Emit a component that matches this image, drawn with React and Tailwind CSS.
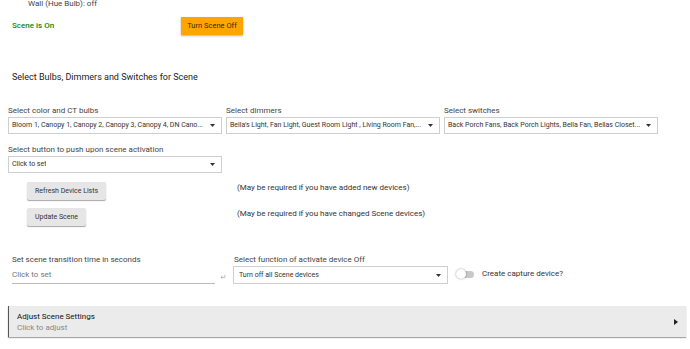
import React from "react";

const Caret = () => (
  <svg width="5" height="3" viewBox="0 0 5 3" className="shrink-0">
    <path d="M0 0 L5 0 L2.5 3 Z" fill="#333" />
  </svg>
);

const Select = ({ value, className = "" }) => (
  <div
    className={`flex items-center justify-between h-[17px] border border-[#cfcfcf] bg-white pl-[3px] pr-[6px] text-[7px] text-[#333] ${className}`}
  >
    <span className="overflow-hidden whitespace-nowrap">{value}</span>
    <Caret />
  </div>
);

const Field = ({ label, value }) => (
  <div>
    <div className="text-[8px] leading-[11px] text-[#444]">{label}</div>
    <Select value={value} className="mt-[1px]" />
  </div>
);

const GrayButton = ({ children }) => (
  <button className="h-[18px] px-[8px] bg-[#e6e6e6] rounded-[2px] text-[7px] text-[#333] shadow-[0_1px_1px_rgba(0,0,0,0.35)]">
    {children}
  </button>
);

export default function App() {
  return (
    <div
      className="w-[690px] h-[349px] overflow-hidden bg-white text-[#333]"
      style={{ fontFamily: "Roboto, 'Liberation Sans', sans-serif" }}
    >
      {/* device status line, cut at the top */}
      <div className="h-[10px] pl-[28px] text-[8px] leading-[8px] text-[#444]">
        Wall (Hue Bulb): off
      </div>

      <div className="flex items-center mt-[7px] h-[18px]">
        <div className="w-[181px] pl-[12px] text-[8px] font-medium text-[#0a870a]">
          Scene is On
        </div>
        <button className="w-[62px] h-[18px] bg-[#ffa500] text-[7.5px] text-[#3a2a00] shadow-[0_1px_2px_rgba(0,0,0,0.3)]">
          Turn Scene Off
        </button>
      </div>

      <div className="mt-[36px] pl-[12px] text-[9px] leading-[12px] text-[#222]">
        Select Bulbs, Dimmers and Switches for Scene
      </div>

      <div className="mt-[22px] pl-[8px] grid grid-cols-[214px_214px_214px] gap-x-[4px]">
        <Field
          label="Select color and CT bulbs"
          value="Bloom 1, Canopy 1, Canopy 2, Canopy 3, Canopy 4, DN Cano..."
        />
        <Field
          label="Select dimmers"
          value="Bella's Light, Fan Light, Guest Room Light , Living Room Fan,..."
        />
        <Field
          label="Select switches"
          value="Back Porch Fans, Back Porch Lights, Bella Fan, Bellas Closet..."
        />
      </div>

      <div className="mt-[10px] pl-[8px] w-[222px]">
        <Field label="Select button to push upon scene activation" value="Click to set" />
      </div>

      <div className="mt-[6px] flex items-center h-[18px]">
        <div className="w-[237px] pl-[27px]">
          <GrayButton>Refresh Device Lists</GrayButton>
        </div>
        <span className="text-[8px] text-[#333]">
          (May be required if you have added new devices)
        </span>
      </div>

      <div className="mt-[8px] flex items-center h-[18px]">
        <div className="w-[237px] pl-[27px]">
          <GrayButton>Update Scene</GrayButton>
        </div>
        <span className="text-[8px] text-[#333]">
          (May be required if you have changed Scene devices)
        </span>
      </div>

      <div className="mt-[31px] flex items-start">
        <div className="w-[233px] pl-[12px] flex items-end shrink-0">
          <div className="w-[203px]">
            <div className="text-[8px] leading-[11px] text-[#444]">
              Set scene transition time in seconds
            </div>
            <div className="mt-[4px] pb-[3px] border-b border-[#bbb] text-[8px] leading-[11px] text-[#777]">
              Click to set
            </div>
          </div>
          <svg width="6" height="6" viewBox="0 0 8 7" className="ml-[5px] mb-[4px]">
            <path d="M6.5 0.5 V4 H1.5 M3 2.5 L1.2 4 L3 5.5" fill="none" stroke="#999" strokeWidth="0.9" />
          </svg>
        </div>
        <div className="w-[215px] shrink-0">
          <div className="text-[8px] leading-[11px] text-[#444] pl-[1px]">
            Select function of activate device Off
          </div>
          <Select value="Turn off all Scene devices" className="mt-[1px] h-[18px] pl-[5px]" />
        </div>
        <div className="ml-[8px] mt-[14px] flex items-center">
          <div className="relative w-[18px] h-[10px] flex items-center">
            <div className="ml-[4px] w-[14px] h-[7px] rounded-full bg-[#c8c8c8]" />
            <div className="absolute left-0 top-0 w-[10px] h-[10px] rounded-full bg-white shadow-[0_0_2px_rgba(0,0,0,0.45)]" />
          </div>
          <span className="ml-[8px] text-[8px] text-[#333]">Create capture device?</span>
        </div>
      </div>

      <div className="mt-[22px] ml-[8px] w-[678px] h-[31px] bg-[#ebebeb] border-l border-[#555] shadow-[0_1px_1px_rgba(0,0,0,0.35)] flex items-center justify-between pl-[8px] pr-[8px]">
        <div>
          <div className="text-[8px] leading-[11px] text-[#111]">Adjust Scene Settings</div>
          <div className="text-[8px] leading-[11px] text-[#888]">Click to adjust</div>
        </div>
        <svg width="4" height="6" viewBox="0 0 4 6">
          <path d="M0 0 L4 3 L0 6 Z" fill="#222" />
        </svg>
      </div>
    </div>
  );
}
